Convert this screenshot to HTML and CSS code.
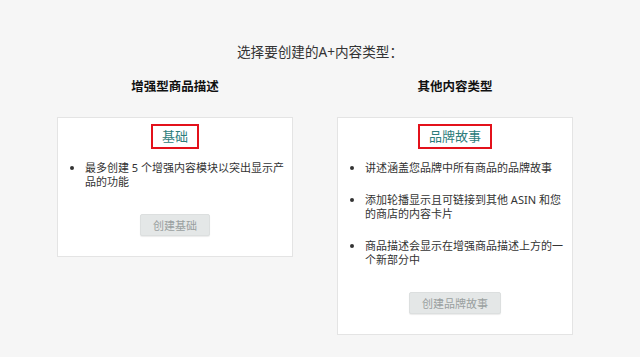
FILE: index.html
```html
<!DOCTYPE html>
<html lang="zh-CN">
<head>
    <meta charset="UTF-8">
    <meta name="viewport" content="width=device-width, initial-scale=1.0">
    <title>A+ 内容类型</title>
    <link rel="stylesheet" href="styles.css">
</head>
<body>
    <div class="page">
        <p class="intro">选择要创建的A+内容类型：</p>
        <div class="columns">
            <section class="column">
                <h2>增强型商品描述</h2>
                <div class="card">
                    <div class="card-title"><span>基础</span></div>
                    <ul class="features">
                        <li>最多创建 5 个增强内容模块以突出显示产品的功能</li>
                    </ul>
                    <button class="create">创建基础</button>
                </div>
            </section>
            <section class="column">
                <h2>其他内容类型</h2>
                <div class="card">
                    <div class="card-title"><span>品牌故事</span></div>
                    <ul class="features">
                        <li>讲述涵盖您品牌中所有商品的品牌故事</li>
                        <li>添加轮播显示且可链接到其他 ASIN 和您的商店的内容卡片</li>
                        <li>商品描述会显示在增强商品描述上方的一个新部分中</li>
                    </ul>
                    <button class="create">创建品牌故事</button>
                </div>
            </section>
        </div>
    </div>
</body>
</html>
```

FILE: styles.css
```css
body {
    margin: 0;
    background-color: #f6f6f6;
    font-family: "Noto Sans", "Noto Sans CJK SC", sans-serif;
    color: #333;
}

.page {
    padding-top: 43px;
}

.intro {
    margin: 0;
    text-align: center;
    font-size: 13.6px;
    line-height: 18px;
    color: #333;
}

.columns {
    display: flex;
    gap: 44px;
    margin-left: 57px;
    margin-top: 16px;
}

.column {
    width: 236px;
    display: flex;
    flex-direction: column;
    align-items: stretch;
}

.column h2 {
    margin: 0 0 20px;
    text-align: center;
    font-size: 12.5px;
    line-height: 20px;
    font-weight: bold;
    color: #111;
}

.card {
    background: #fff;
    border: 1px solid #e4e4e4;
    padding: 6px 6px 20px;
    display: flex;
    flex-direction: column;
    align-items: center;
}

.card-title span {
    display: inline-block;
    border: 2px solid #e3111b;
    padding: 0 9px;
    font-size: 13px;
    line-height: 21px;
    color: #2d7d7b;
}

.features {
    align-self: stretch;
    margin: 12px 0 0;
    padding-left: 21px;
    font-size: 11px;
    line-height: 14px;
    color: #333;
}

.features li {
    margin-bottom: 18px;
}

.features li:last-child {
    margin-bottom: 0;
}

.create {
    margin-top: 25px;
    padding: 0 12px;
    height: 22px;
    font-family: inherit;
    font-size: 11px;
    color: #9aa0a0;
    background: #e4e7e7;
    border: 1px solid #dcdfdf;
    border-radius: 2px;
    box-shadow: 0 1px 1px rgba(0, 0, 0, 0.08);
}
```
